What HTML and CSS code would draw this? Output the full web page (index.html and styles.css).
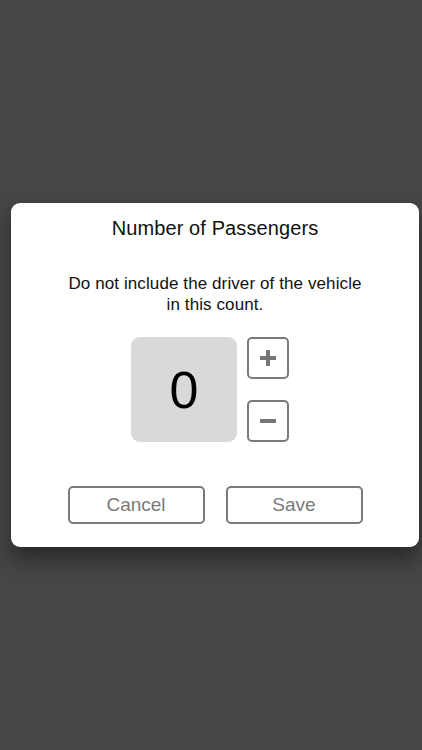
FILE: index.html
```html
<!DOCTYPE html>
<html lang="en">
<head>
    <meta charset="UTF-8">
    <meta name="viewport" content="width=device-width, initial-scale=1.0">
    <title>Number of Passengers</title>
    <link rel="stylesheet" href="styles.css">
</head>
<body>
    <div class="overlay">
        <div class="dialog">
            <h2 class="title">Number of Passengers</h2>
            <p class="note">Do not include the driver of the vehicle<br>in this count.</p>

            <div class="counter">
                <div class="count-box" id="count">0</div>
                <div class="steppers">
                    <button class="step-btn" id="plusBtn" aria-label="Add">
                        <svg width="18" height="18" viewBox="0 0 18 18">
                            <rect x="7" y="1" width="4" height="16" rx="0.5" fill="#767676"/>
                            <rect x="1" y="7" width="16" height="4" rx="0.5" fill="#767676"/>
                        </svg>
                    </button>
                    <button class="step-btn" id="minusBtn" aria-label="Remove">
                        <svg width="18" height="18" viewBox="0 0 18 18">
                            <rect x="1" y="7" width="16" height="4" rx="0.5" fill="#767676"/>
                        </svg>
                    </button>
                </div>
            </div>

            <div class="actions">
                <button class="action-btn">Cancel</button>
                <button class="action-btn">Save</button>
            </div>
        </div>
    </div>
</body>
</html>
```

FILE: styles.css
```css
* {
    margin: 0;
    padding: 0;
    box-sizing: border-box;
}

body {
    font-family: 'Liberation Sans', Arial, sans-serif;
    background: #464646;
    height: 100vh;
    overflow: hidden;
}

.overlay {
    padding-top: 203px;
    padding-left: 11px;
}

.dialog {
    width: 408px;
    height: 344px;
    background: #ffffff;
    border-radius: 9px;
    box-shadow: 0 12px 22px rgba(0, 0, 0, 0.45);
    display: flex;
    flex-direction: column;
    align-items: center;
    padding-top: 13px;
}

.title {
    font-size: 20px;
    font-weight: normal;
    color: #111;
    line-height: 24px;
    letter-spacing: 0.1px;
}

.note {
    margin-top: 33px;
    font-size: 17px;
    line-height: 21px;
    text-align: center;
    color: #111;
    letter-spacing: 0.1px;
}

.counter {
    display: flex;
    gap: 10px;
    margin-top: 22px;
    margin-right: 10px;
}

.count-box {
    width: 106px;
    height: 105px;
    background: #d9d9d9;
    border-radius: 9px;
    display: flex;
    justify-content: center;
    align-items: center;
    font-size: 52px;
    color: #000;
}

.steppers {
    display: flex;
    flex-direction: column;
    justify-content: space-between;
}

.step-btn {
    width: 42px;
    height: 42px;
    background: #fff;
    border: 2px solid #7a7a7a;
    border-radius: 5px;
    display: flex;
    justify-content: center;
    align-items: center;
}

.actions {
    display: flex;
    gap: 21px;
    margin-top: 44px;
}

.action-btn {
    width: 137px;
    height: 38px;
    background: #fff;
    border: 2px solid #7a7a7a;
    border-radius: 5px;
    font-family: 'Liberation Sans', Arial, sans-serif;
    font-size: 19px;
    color: #7a7a7a;
}
```
